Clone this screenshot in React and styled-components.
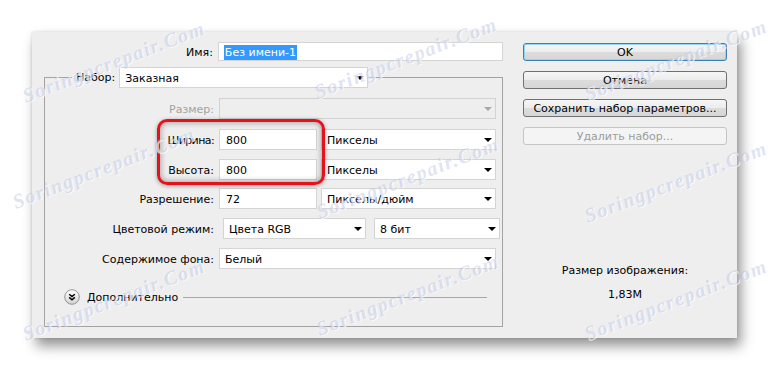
import styled, { createGlobalStyle } from "styled-components";

const GlobalStyle = createGlobalStyle`
  html, body {
    margin: 0;
    background: #ffffff;
  }
  body {
    font-family: "DejaVu Sans", "Liberation Sans", sans-serif;
    font-size: 11px;
    color: #000;
  }
`;

const Page = styled.div`
  position: relative;
  width: 769px;
  height: 372px;
  padding: 32px 0 0 32px;
  box-sizing: border-box;
  overflow: hidden;
`;

const Dialog = styled.div`
  width: 705px;
  height: 306px;
  background: #eeeeee;
  display: flex;
  box-shadow: 4px 8px 12px rgba(0, 0, 0, 0.42), 0 0 3px rgba(0, 0, 0, 0.15);
`;

const LeftPane = styled.div`
  width: 459px;
  padding: 10px 0 0 12px;
`;

const NameRow = styled.div`
  display: flex;
  align-items: center;
  height: 19px;
`;

const Label = styled.label`
  width: ${({ width }) => width || 169}px;
  margin-right: 5px;
  padding-top: 1px;
  text-align: right;
  white-space: nowrap;
  letter-spacing: ${({ tight }) => (tight ? "-0.6px" : "normal")};
  color: ${({ disabled }) => (disabled ? "#a2a2a2" : "#000")};
`;

const TextBox = styled.div`
  width: ${({ width }) => width}px;
  height: ${({ height }) => height || 21}px;
  box-sizing: border-box;
  background: #ffffff;
  border: 1px solid #d4d4d4;
  display: flex;
  align-items: center;
  padding-left: ${({ pad }) => pad ?? 6}px;
  padding-top: 1px;
  white-space: nowrap;
`;

const Selected = styled.span`
  background: #3399ff;
  color: #ffffff;
  line-height: 15px;
  padding: 0 1px;
`;

const SelectBox = styled.div`
  width: ${({ width }) => width}px;
  height: 21px;
  box-sizing: border-box;
  background: ${({ disabled }) => (disabled ? "#eeeeee" : "#ffffff")};
  border: 1px solid ${({ disabled }) => (disabled ? "#d2d2d2" : "#d4d4d4")};
  display: flex;
  align-items: center;
  justify-content: space-between;
  padding: 1px 3px 0 5px;
  white-space: nowrap;
`;

const Group = styled.fieldset`
  width: 459px;
  box-sizing: border-box;
  margin: 6px 0 0 0;
  padding: 10px 0 21px 0;
  border: 1px solid #a3a3a3;
  min-inline-size: 0;
`;

const Legend = styled.legend`
  margin-left: 27px;
  padding: 0 0 0 4px;
`;

const LegendInner = styled.span`
  display: inline-flex;
  align-items: center;
  gap: 4px;
`;

const Row = styled.div`
  display: flex;
  align-items: center;
  height: 21px;
  margin-bottom: 9px;
  gap: ${({ gap }) => gap ?? 4}px;

  & > label {
    margin-right: 1px;
  }
`;

const Highlighted = styled.div`
  position: relative;
  top: 1px;
`;

const RedFrame = styled.div`
  position: absolute;
  left: 112px;
  top: -10px;
  width: 168px;
  height: 66px;
  box-sizing: border-box;
  border: 3px solid #e5121c;
  border-radius: 10px;
  box-shadow: inset 0 0 6px rgba(0, 0, 0, 0.4), 0 1px 4px rgba(0, 0, 0, 0.35);
  pointer-events: none;
`;

const MoreRow = styled.div`
  display: flex;
  align-items: center;
  height: 16px;
  margin-top: 20px;
  padding-left: 19px;
  padding-right: 15px;
`;

const MoreText = styled.span`
  margin-left: 7px;
  white-space: nowrap;
`;

const Rule = styled.div`
  flex: 1;
  height: 1px;
  background: #a8a8a8;
  margin-left: 5px;
`;

const RightPane = styled.div`
  margin-left: 20px;
  padding-top: 11px;
  width: 204px;
  display: flex;
  flex-direction: column;
`;

const Button = styled.div`
  height: 18px;
  box-sizing: border-box;
  margin-bottom: 10px;
  border: 1px solid ${({ primary, disabled }) =>
    disabled ? "#c4c4c4" : primary ? "#3c7fb1" : "#707070"};
  border-radius: 3px;
  background: ${({ disabled }) =>
    disabled ? "#f4f4f4" : "linear-gradient(#f6f6f6 0%, #ececec 50%, #dcdcdc 51%, #d6d6d6 100%)"};
  color: ${({ disabled }) => (disabled ? "#9c9c9c" : "#000")};
  display: flex;
  align-items: center;
  justify-content: center;
  white-space: nowrap;
  box-shadow: ${({ primary }) => (primary ? "inset 0 0 0 1px #94d4f5" : "none")};
`;

const Info = styled.div`
  margin-top: 104px;
  text-align: center;
  line-height: 24px;
`;

const Watermark = styled.div`
  position: absolute;
  left: ${({ x }) => x}px;
  top: ${({ y }) => y}px;
  transform: translate(-50%, -50%) rotate(-21deg);
  font-family: "Liberation Serif", serif;
  font-style: italic;
  font-weight: bold;
  font-size: 20px;
  letter-spacing: 1.5px;
  color: rgba(170, 182, 222, 0.38);
  text-shadow: 1px 1px 0 rgba(255, 255, 255, 0.7);
  white-space: nowrap;
  pointer-events: none;
`;

const Arrow = ({ disabled }) => (
  <svg width="8" height="4" viewBox="0 0 8 4">
    <polygon points="0,0 8,0 4,4" fill={disabled ? "#a9a9a9" : "#000"} />
  </svg>
);

const Select = ({ width, disabled, children }) => (
  <SelectBox width={width} disabled={disabled}>
    <span>{children}</span>
    <Arrow disabled={disabled} />
  </SelectBox>
);

const MoreIcon = () => (
  <svg width="16" height="16" viewBox="0 0 16 16">
    <defs>
      <linearGradient id="mg" x1="0" y1="0" x2="0" y2="1">
        <stop offset="0" stopColor="#ffffff" />
        <stop offset="1" stopColor="#d2d2d2" />
      </linearGradient>
    </defs>
    <circle cx="8" cy="8" r="7.3" fill="url(#mg)" stroke="#8a8a8a" strokeWidth="0.9" />
    <path d="M5.2 5.2 L8 7.6 L10.8 5.2 M5.2 8.4 L8 10.8 L10.8 8.4" fill="none" stroke="#000" strokeWidth="1.4" />
  </svg>
);

const marks = [
  [114, 62], [406, 58], [676, 60],
  [104, 168], [408, 178], [676, 182],
  [114, 300], [408, 295], [676, 300],
];

export default function App() {
  return (
    <Page>
      <GlobalStyle />
      <Dialog>
        <LeftPane>
          <NameRow>
            <Label width={170}>Имя:</Label>
            <TextBox width={287} height={19} pad={5}>
              <Selected>Без имени-1</Selected>
            </TextBox>
          </NameRow>

          <Group>
            <Legend>
              <LegendInner>
                <span>Набор:</span>
                <Select width={249}>Заказная</Select>
              </LegendInner>
            </Legend>

            <Row>
              <Label disabled>Размер:</Label>
              <Select width={277} disabled />
            </Row>

            <Highlighted>
              <Row>
                <Label tight>Ширина:</Label>
                <TextBox width={98}>800</TextBox>
                <Select width={175}>Пикселы</Select>
              </Row>
              <Row>
                <Label>Высота:</Label>
                <TextBox width={98}>800</TextBox>
                <Select width={175}>Пикселы</Select>
              </Row>
              <RedFrame />
            </Highlighted>

            <Row>
              <Label>Разрешение:</Label>
              <TextBox width={98}>72</TextBox>
              <Select width={175}>Пикселы/дюйм</Select>
            </Row>
            <Row gap={8}>
              <Label>Цветовой режим:</Label>
              <Select width={143}>Цвета RGB</Select>
              <Select width={126}>8 бит</Select>
            </Row>
            <Row>
              <Label>Содержимое фона:</Label>
              <Select width={277}>Белый</Select>
            </Row>

            <MoreRow>
              <MoreIcon />
              <MoreText>Дополнительно</MoreText>
              <Rule />
            </MoreRow>
          </Group>
        </LeftPane>

        <RightPane>
          <Button primary>OK</Button>
          <Button>Отмена</Button>
          <Button>Сохранить набор параметров...</Button>
          <Button disabled>Удалить набор...</Button>
          <Info>
            <div>Размер изображения:</div>
            <div>1,83M</div>
          </Info>
        </RightPane>
      </Dialog>

      {marks.map(([x, y], i) => (
        <Watermark key={i} x={x} y={y}>
          Soringpcrepair.Com
        </Watermark>
      ))}
    </Page>
  );
}
